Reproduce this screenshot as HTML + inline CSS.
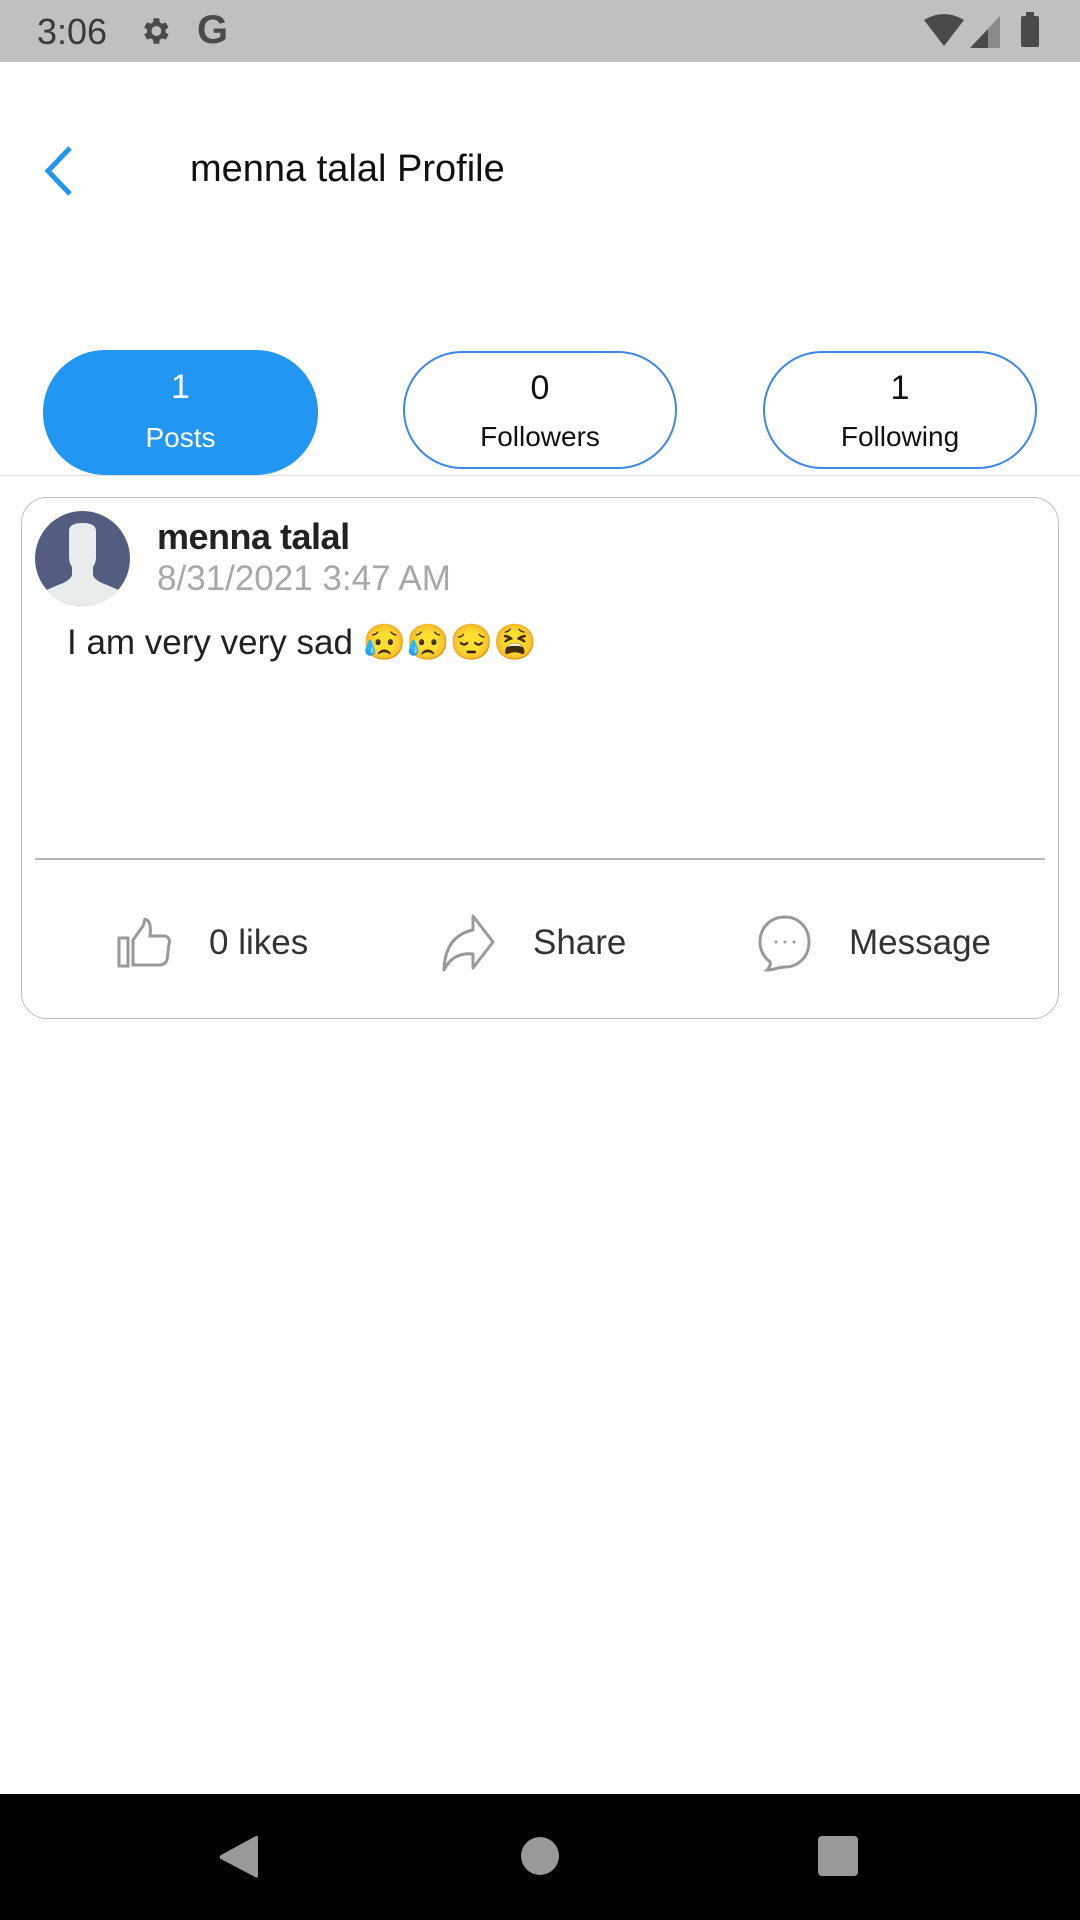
<!DOCTYPE html>
<html><head><meta charset="utf-8">
<style>
*{margin:0;padding:0;box-sizing:border-box}
body{width:1080px;height:1920px;position:relative;background:#fff;font-family:"Liberation Sans",sans-serif;overflow:hidden}
.abs{position:absolute}
.sb{left:0;top:0;width:1080px;height:62px;background:#c0c0c0}
.pill{position:absolute;top:351px;height:118px;width:274px;border-radius:59px;border:2.5px solid #3d86f0;text-align:center;color:#111}
.pill .n{position:absolute;left:0;right:0;top:16px;font-size:34px;font-weight:300}
.pill .l{position:absolute;left:0;right:0;top:68px;font-size:28px}
.nav{left:0;top:1794px;width:1080px;height:126px;background:#000}
.act{position:absolute;top:920px;font-size:35px;color:#333;font-weight:300;line-height:46px}
</style></head><body>
<div class="abs sb">
  <div class="abs" style="left:37px;top:11px;font-size:36px;color:#3a3a3a">3:06</div>
  <svg class="abs" style="left:138px;top:14px" width="34" height="34" viewBox="0 0 24 24"><path fill="#4a4a4a" d="M19.4 13a7.5 7.5 0 000-2l2.1-1.6-2-3.5-2.5 1a7.3 7.3 0 00-1.7-1L15 3h-4l-.4 2.9a7.3 7.3 0 00-1.7 1l-2.5-1-2 3.5L6.5 11a7.5 7.5 0 000 2l-2.1 1.6 2 3.5 2.5-1a7.3 7.3 0 001.7 1L11 21h4l.4-2.9a7.3 7.3 0 001.7-1l2.5 1 2-3.5zM13 15.5a3.5 3.5 0 110-7 3.5 3.5 0 010 7z"/></svg>
  <div class="abs" style="left:197px;top:8px;font-size:40px;font-weight:bold;color:#4a4a4a">G</div>
  <svg class="abs" style="left:924px;top:14px" width="40" height="34" viewBox="0 0 40 34"><path d="M0 6Q20-6 40 6L20 32Z" fill="#4a4a4a"/></svg>
  <svg class="abs" style="left:970px;top:14px" width="32" height="34" viewBox="0 0 32 34"><path d="M0 34L30 2V34Z" fill="#8a8a8a"/><path d="M0 34L18 15V34Z" fill="#4a4a4a"/></svg>
  <div class="abs" style="left:1021px;top:16px;width:18px;height:31px;background:#4a4a4a;border-radius:2px"></div>
  <div class="abs" style="left:1026px;top:12px;width:8px;height:5px;background:#4a4a4a"></div>
</div>
<svg class="abs" style="left:40px;top:145px" width="36" height="52" viewBox="0 0 36 52"><path d="M30 3L8 26L30 49" stroke="#2196f3" stroke-width="5" fill="none"/></svg>
<div class="abs" style="left:190px;top:148px;font-size:38px;color:#111;font-weight:300">menna talal Profile</div>

<div class="pill" style="left:43px;top:350px;height:125px;width:275px;background:#2196f3;border-color:#2196f3;border-radius:62px;color:#fff"><div class="n" style="top:16px">1</div><div class="l" style="top:70px">Posts</div></div>
<div class="pill" style="left:403px"><div class="n">0</div><div class="l">Followers</div></div>
<div class="pill" style="left:763px"><div class="n">1</div><div class="l">Following</div></div>
<div class="abs" style="left:0;top:475px;width:1080px;height:1px;background:#e2e2e2"></div>

<div class="abs" style="left:21px;top:497px;width:1038px;height:522px;border:1.5px solid #bdbdbd;border-radius:26px"></div>
<svg class="abs" style="left:35px;top:511px" width="95" height="95" viewBox="0 0 95 95"><defs><clipPath id="c"><circle cx="47.5" cy="47.5" r="47.5"/></clipPath></defs><g clip-path="url(#c)"><rect width="95" height="95" fill="#525d80"/><path d="M34 20Q34 12 47.5 12Q61 12 61 20L61 46Q61 52 58 56L58 64Q60 70 72 74L95 84V95H0V84L23 74Q35 70 37 64L37 56Q34 52 34 46Z" fill="#e8eced"/></g></svg>
<div class="abs" style="left:157px;top:516px;font-size:36px;color:#222;font-weight:bold;letter-spacing:-0.5px">menna talal</div>
<div class="abs" style="left:157px;top:559px;font-size:35px;color:#a8a8a8;font-weight:300">8/31/2021 3:47 AM</div>
<div class="abs" style="left:67px;top:622px;font-size:35px;color:#222;font-weight:300">I am very very sad 😥😥😔😫</div>
<div class="abs" style="left:35px;top:858px;width:1010px;height:1.5px;background:#b5b5b5"></div>

<svg class="abs" style="left:117px;top:918px" width="56" height="50" viewBox="0 0 56 50"><rect x="2" y="20" width="9" height="28" fill="none" stroke="#999" stroke-width="3"/><path d="M16 22L26 8L28 1Q35 3 33 18L48 18Q54 20 52 26L50 42Q48 47 42 47L16 47Z" fill="none" stroke="#999" stroke-width="3"/></svg>
<div class="act" style="left:209px">0 likes</div>
<svg class="abs" style="left:441px;top:914px" width="56" height="58" viewBox="0 0 56 58"><path d="M32 2L52 28L32 54L32 40Q12 38 3 56Q4 22 32 16Z" fill="none" stroke="#999" stroke-width="3" stroke-linejoin="round"/></svg>
<div class="act" style="left:533px">Share</div>
<svg class="abs" style="left:757px;top:914px" width="56" height="58" viewBox="0 0 56 58"><path d="M28 3C41 3 52 13 52 28C52 43 41 53 28 53C22 53 17 56 10 56C14 52 14 48 12 47C6 42 3 36 3 28C3 13 14 3 28 3Z" fill="none" stroke="#999" stroke-width="3"/><circle cx="19" cy="28" r="1.5" fill="#999"/><circle cx="28" cy="28" r="1.5" fill="#999"/><circle cx="37" cy="28" r="1.5" fill="#999"/></svg>
<div class="act" style="left:849px">Message</div>

<div class="abs nav">
  <svg class="abs" style="left:218px;top:40px" width="42" height="46" viewBox="0 0 42 46"><path d="M38 2Q40 1 40 5V41Q40 45 37 43L3 25Q0 23 3 21Z" fill="#999"/></svg>
  <div class="abs" style="left:521px;top:43px;width:38px;height:38px;border-radius:50%;background:#999"></div>
  <div class="abs" style="left:818px;top:42px;width:40px;height:40px;border-radius:4px;background:#999"></div>
</div>
</body></html>
